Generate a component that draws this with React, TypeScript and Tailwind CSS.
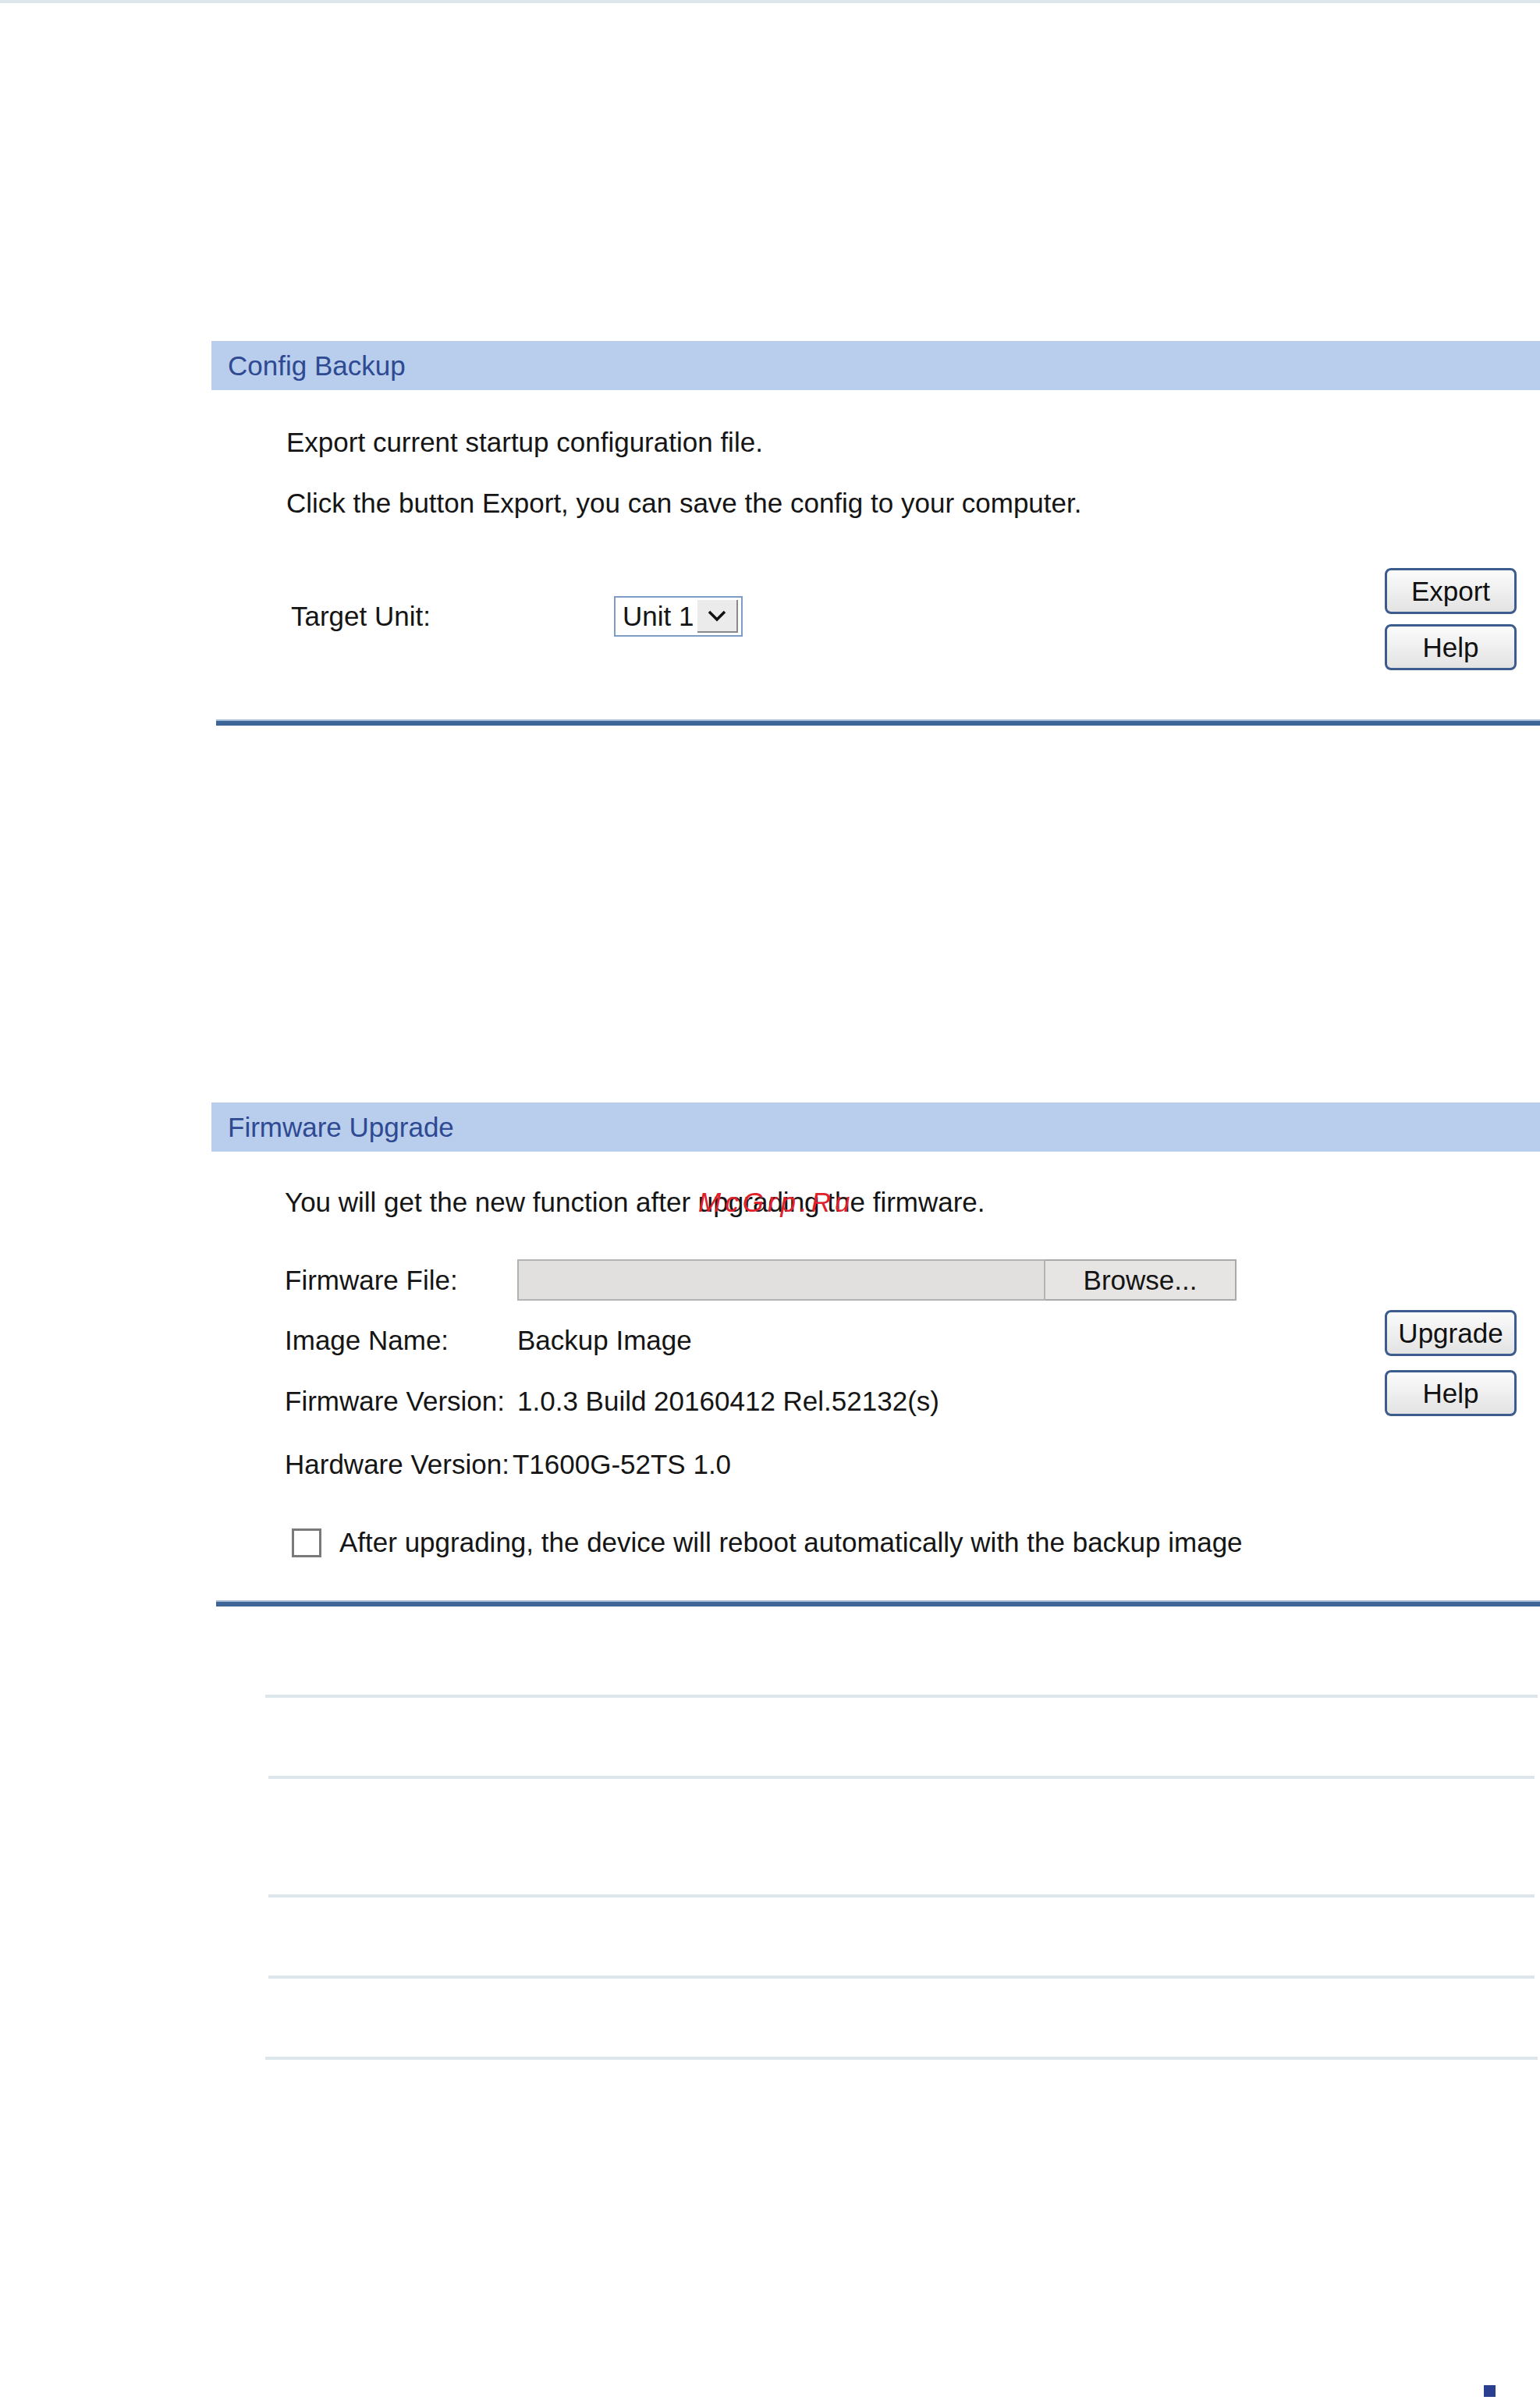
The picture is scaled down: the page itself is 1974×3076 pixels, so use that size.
function PageButton({ label }: { label: string }) {
  return (
    <button
      type="button"
      className="flex h-[59px] w-[169px] items-center justify-center rounded-[8px] border-[3px] border-[#3c5c8e] bg-linear-to-b from-[#fbfbfb] to-[#e3e3e3] text-[35px] leading-none text-[#111]"
    >
      {label}
    </button>
  );
}

function SectionHeader({ title }: { title: string }) {
  return (
    <div className="flex h-[63px] items-center bg-[#b9cdec] pl-[21px] text-[35px] text-[#2e4a92]">
      {title}
    </div>
  );
}

function SectionRule() {
  return <div className="ml-[6px] h-[8px] border-t-2 border-[#a9bfd9] bg-[#3d6595]" />;
}

export default function App() {
  return (
    <div className="relative h-[3076px] w-[1974px] overflow-hidden bg-white font-['Liberation_Sans',Arial,sans-serif] text-[35px] leading-[40px] text-[#151515]">
      <div className="h-[4px] bg-[#dde7ec]" />

      {/* Config Backup */}
      <section className="ml-[271px] mt-[433px]">
        <SectionHeader title="Config Backup" />
        <div className="pl-[96px] pr-[30px] pt-[47px]">
          <p>Export current startup configuration file.</p>
          <p className="mt-[38px]">Click the button Export, you can save the config to your computer.</p>
          <div className="mt-[63px] flex items-center justify-between">
            <div className="flex items-center pb-[8px] pl-[6px]">
              <span className="w-[414px]">Target Unit:</span>
              <div className="flex h-[52px] w-[165px] items-center border-2 border-[#7d9dc7] bg-white">
                <span className="flex-1 pl-[9px] leading-none">Unit 1</span>
                <span className="mr-[4px] flex h-[42px] w-[52px] items-center justify-center border-b-2 border-r-2 border-[#8a8a8a] bg-[#ebebeb]">
                  <svg width="26" height="16" viewBox="0 0 26 16">
                    <polyline points="3,3 13,13 23,3" fill="none" stroke="#111" strokeWidth="3.5" />
                  </svg>
                </span>
              </div>
            </div>
            <div className="flex flex-col gap-[13px]">
              <PageButton label="Export" />
              <PageButton label="Help" />
            </div>
          </div>
        </div>
        <div className="mt-[63px]">
          <SectionRule />
        </div>
      </section>

      {/* Firmware Upgrade */}
      <section className="ml-[271px] mt-[483px]">
        <SectionHeader title="Firmware Upgrade" />
        <div className="flex justify-between pl-[94px] pr-[30px]">
          <div className="pt-[45px]">
            <p className="relative h-[40px]">
              You will get the new function after upgrading the firmware.
              <span className="absolute left-[530px] top-0 italic tracking-[5px] text-[#e0202a]">McGrp.Ru</span>
            </p>
            <div className="mt-[53px] flex h-[53px] items-center">
              <span className="w-[298px]">Firmware File:</span>
              <div className="h-[53px] w-[677px] border-2 border-[#b3b3b3] bg-[#e1e0de]" />
              <div className="flex h-[53px] w-[245px] items-center justify-center border-2 border-l-0 border-[#a9a9a9] bg-[#e6e5e3] leading-none">
                Browse...
              </div>
            </div>
            <div className="mt-[31px] flex h-[40px] items-center">
              <span className="w-[298px]">Image Name:</span>
              <span>Backup Image</span>
            </div>
            <div className="mt-[38px] flex h-[40px] items-center">
              <span className="w-[298px]">Firmware Version:</span>
              <span>1.0.3 Build 20160412 Rel.52132(s)</span>
            </div>
            <div className="mt-[41px] flex h-[40px] items-center">
              <span>Hardware Version:</span>
              <span className="ml-[4px]">T1600G-52TS 1.0</span>
            </div>
            <label className="mt-[60px] flex h-[40px] items-center pl-[9px]">
              <span className="h-[37px] w-[38px] border-[3px] border-[#7a7a7a] bg-white" />
              <span className="ml-[23px]">After upgrading, the device will reboot automatically with the backup image</span>
            </label>
          </div>
          <div className="flex flex-col gap-[18px] pt-[203px]">
            <PageButton label="Upgrade" />
            <PageButton label="Help" />
          </div>
        </div>
        <div className="mt-[54px]">
          <SectionRule />
        </div>
      </section>

      {/* empty table rules */}
      <div className="mt-[113px] flex flex-col">
        <div className="ml-[340px] mr-[3px] h-[4px] bg-[#dde7eb]" />
        <div className="ml-[344px] mr-[7px] mt-[100px] h-[4px] bg-[#dde7eb]" />
        <div className="ml-[344px] mr-[7px] mt-[148px] h-[4px] bg-[#dde7eb]" />
        <div className="ml-[344px] mr-[7px] mt-[100px] h-[4px] bg-[#dde7eb]" />
        <div className="ml-[340px] mr-[3px] mt-[100px] h-[4px] bg-[#dde7eb]" />
      </div>

      <div className="absolute left-[1902px] top-[3057px] h-[15px] w-[15px] bg-[#2a3f8f]" />
    </div>
  );
}
